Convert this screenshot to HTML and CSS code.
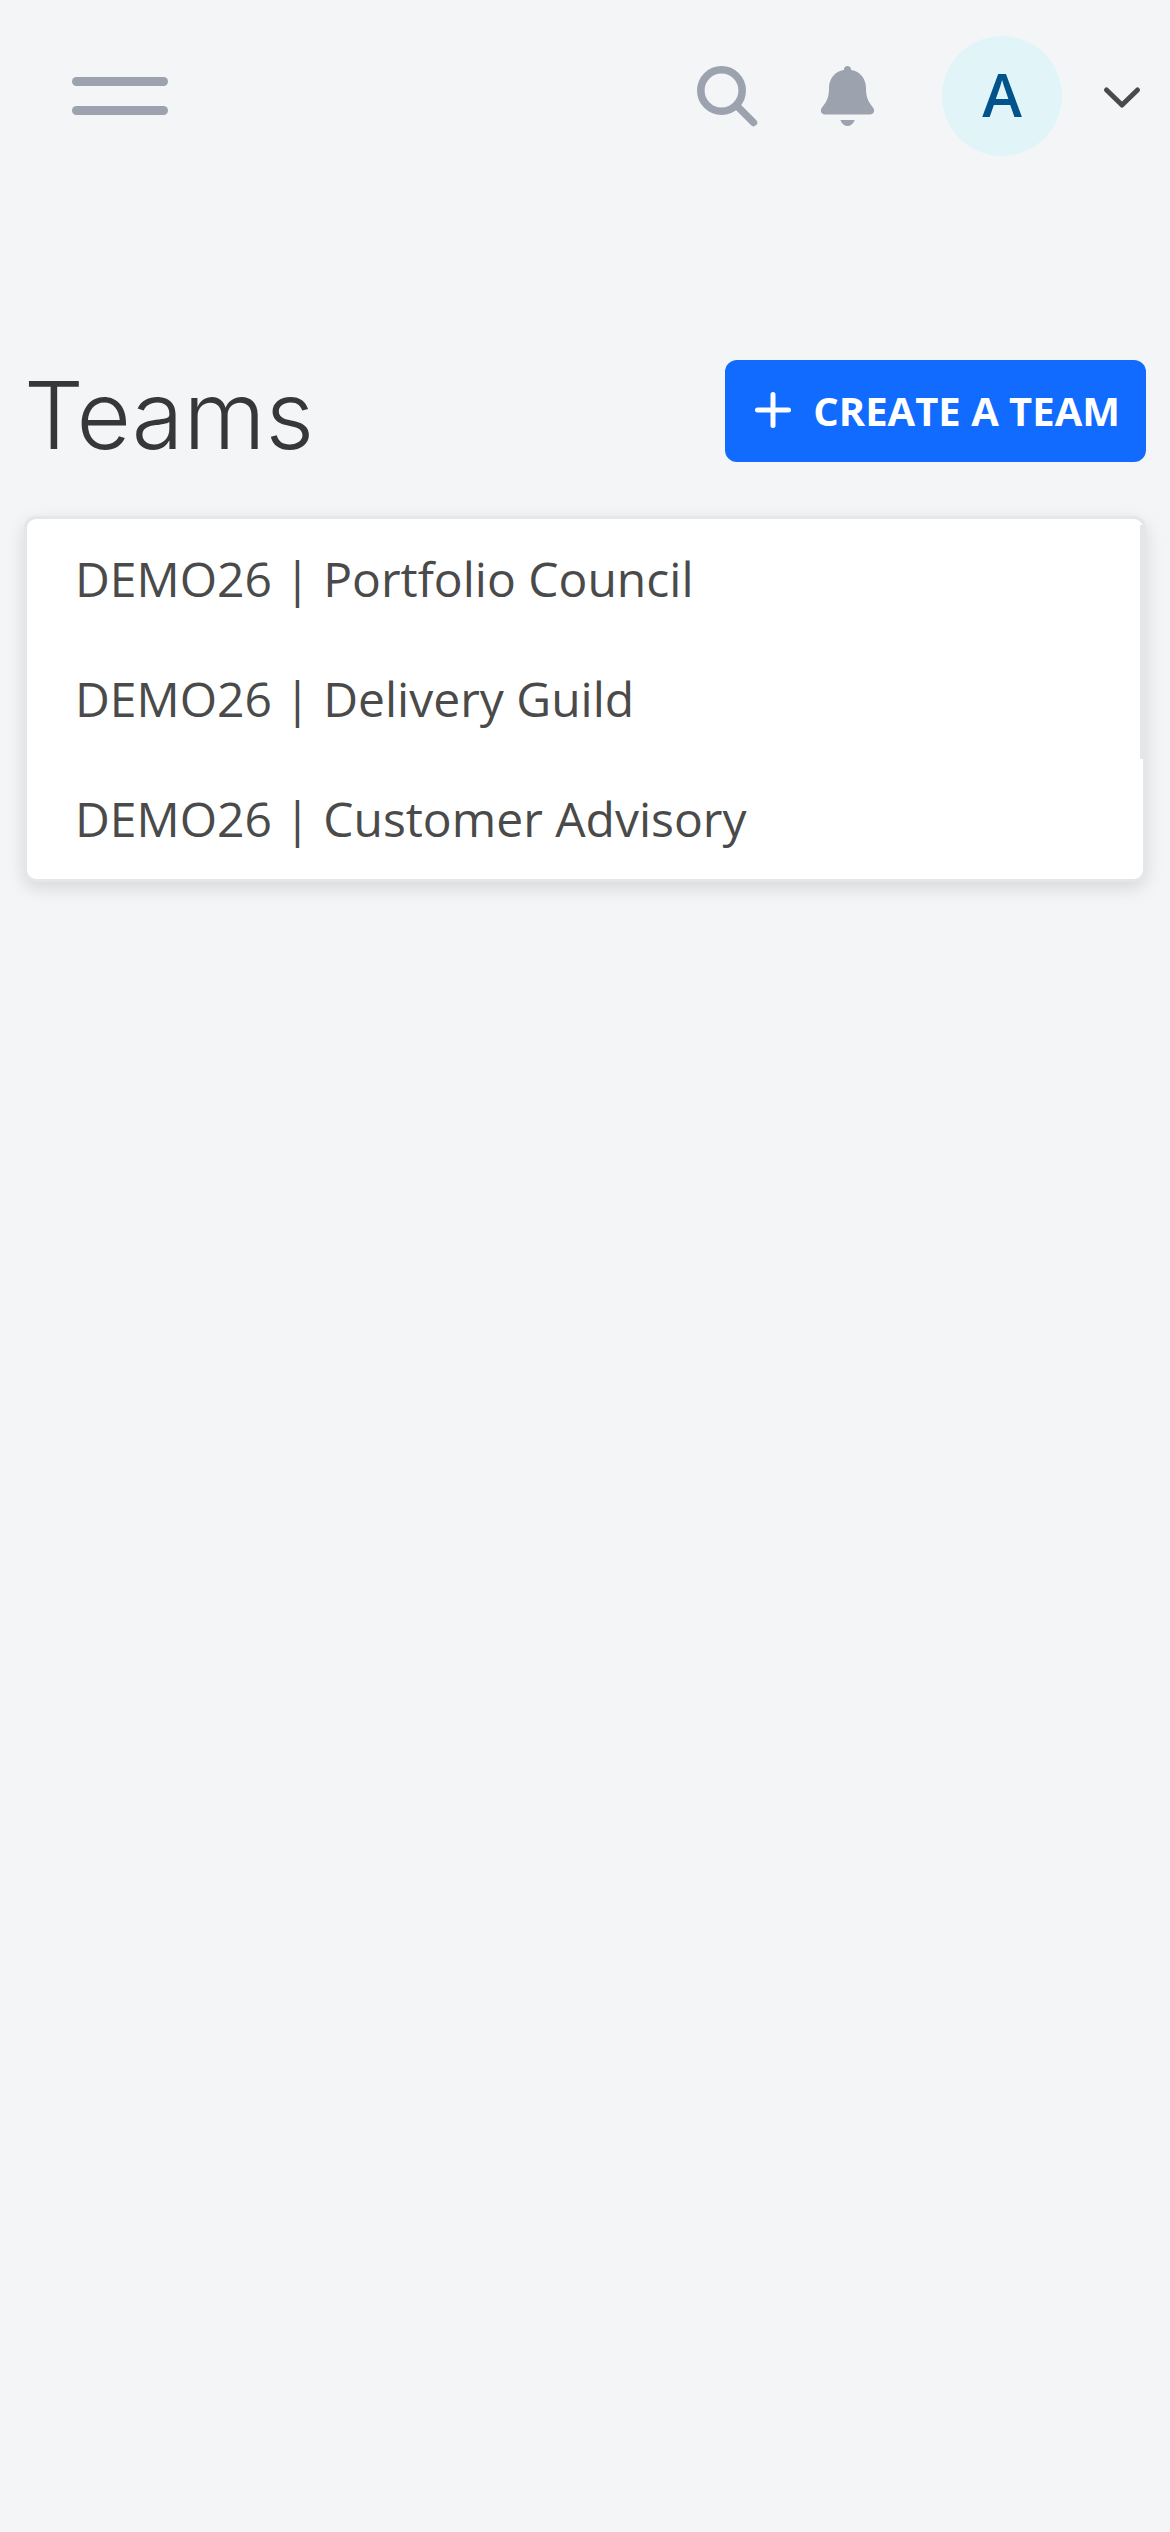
FILE: index.html
```html
<!DOCTYPE html>
<html lang="en">
<head>
    <meta charset="UTF-8">
    <meta name="viewport" content="width=device-width, initial-scale=1.0">
    <title>Teams</title>
    <link rel="stylesheet" href="styles.css">
</head>
<body>
    <header class="topbar">
        <button class="icon-button menu-button" aria-label="Menu">
            <span class="menu-line"></span>
            <span class="menu-line"></span>
        </button>

        <div class="topbar-actions">
            <button class="icon-button" aria-label="Search">
                <svg class="icon" viewBox="0 0 72 72">
                    <circle cx="31.5" cy="30.5" r="20.7" fill="none" stroke="currentColor" stroke-width="7.6"/>
                    <path d="M48 47L63.5 62.5" fill="none" stroke="currentColor" stroke-width="7.4" stroke-linecap="round"/>
                </svg>
            </button>
            <button class="icon-button" aria-label="Notifications">
                <svg class="icon" viewBox="0 0 72 72">
                    <path d="M33.8 10C33.8 4.800 41.200 4.800 41.200 10C50 11.500 56 18.500 56 28C56 37 58 41.500 62.800 47.200C65.500 50.500 63.800 54.500 60 54.500H15C11.200 54.500 9.500 50.500 12.200 47.200C17 41.500 19 37 19 28C19 18.500 25 11.500 33.800 10Z" fill="currentColor"/>
                    <path d="M30.300 60H44.700C43 64 40.500 66 37.500 66C34.500 66 32 64 30.300 60Z" fill="currentColor"/>
                </svg>
            </button>
            <button class="icon-button account-button" aria-label="Account">
                <span class="avatar">A</span>
                <svg class="chevron" viewBox="0 0 48 48">
                    <path d="M8.500 18L24 33L39.500 18" fill="none" stroke="currentColor" stroke-width="5" stroke-linecap="round" stroke-linejoin="round"/>
                </svg>
            </button>
        </div>
    </header>

    <main class="content">
        <div class="page-header">
            <h1 class="page-title">Teams</h1>
            <button class="create-button">
                <svg class="plus" viewBox="0 0 36 36">
                    <path d="M18 2.500V33.500M2.500 18H33.500" fill="none" stroke="currentColor" stroke-width="5" stroke-linecap="round"/>
                </svg>
                Create a team
            </button>
        </div>

        <div class="team-card">
            <ul class="team-list">
                <li><a class="team-link" href="#">DEMO26 | Portfolio Council</a></li>
                <li><a class="team-link" href="#">DEMO26 | Delivery Guild</a></li>
                <li><a class="team-link" href="#">DEMO26 | Customer Advisory</a></li>
            </ul>
            <span class="scroll-thumb"></span>
        </div>
    </main>
</body>
</html>
```
FILE: styles.css
```css
* {
    box-sizing: border-box;
}

body {
    margin: 0;
    min-height: 100vh;
    background-color: #f3f5f7;
    color: #4a4a4a;
    font-family: "Open Sans", "Noto Sans", sans-serif;
}

button {
    border: none;
    padding: 0;
    background: none;
    font-family: inherit;
    cursor: pointer;
}

/* Top bar */
.topbar {
    display: flex;
    align-items: center;
    justify-content: space-between;
    height: 192px;
    padding: 0 24px 0 72px;
}

.icon-button {
    display: flex;
    color: #9ca3af;
}

.menu-button {
    flex-direction: column;
    gap: 20px;
    width: 96px;
}

.menu-line {
    width: 100%;
    height: 9px;
    border-radius: 5px;
    background-color: #9ca3af;
}

.topbar-actions {
    display: flex;
    align-items: center;
    gap: 48px;
}

.icon {
    width: 72px;
    height: 72px;
}

.account-button {
    align-items: center;
    gap: 36px;
    margin-left: 12px;
    color: #4a4a4a;
}

.avatar {
    width: 120px;
    height: 120px;
    border-radius: 50%;
    background-color: #e1f5f9;
    color: #01538b;
    font-size: 60px;
    font-weight: 600;
    line-height: 116px;
    text-align: center;
}

.chevron {
    width: 48px;
    height: 48px;
}

/* Page content */
.content {
    padding: 168px 24px 24px;
}

.page-header {
    display: flex;
    align-items: flex-start;
    justify-content: space-between;
    height: 156px;
}

.page-title {
    margin: 0;
    color: #363838;
    font-family: Inter, sans-serif;
    font-size: 94px;
    font-weight: 300;
    line-height: 110px;
}

.create-button {
    display: flex;
    align-items: center;
    gap: 22px;
    height: 102px;
    padding: 0 26px 2px 30px;
    border-radius: 12px;
    background-color: #126bff;
    color: #fff;
    font-size: 40px;
    font-weight: 700;
    text-transform: uppercase;
}

.plus {
    width: 36px;
    height: 36px;
}

/* Team list */
.team-card {
    position: relative;
    border: 3px solid #e4e6e8;
    border-radius: 12px;
    background-color: #fff;
    box-shadow: 0 6px 18px rgba(0, 0, 0, 0.12);
}

.team-list {
    margin: 0;
    padding: 0;
    list-style: none;
}

.team-link {
    display: block;
    padding: 0 48px;
    color: #4a4a4a;
    font-size: 48px;
    line-height: 120px;
    text-decoration: none;
}

.scroll-thumb {
    position: absolute;
    top: 6px;
    right: 0;
    width: 3px;
    height: 65%;
    background-color: #e4e6e8;
}
```
